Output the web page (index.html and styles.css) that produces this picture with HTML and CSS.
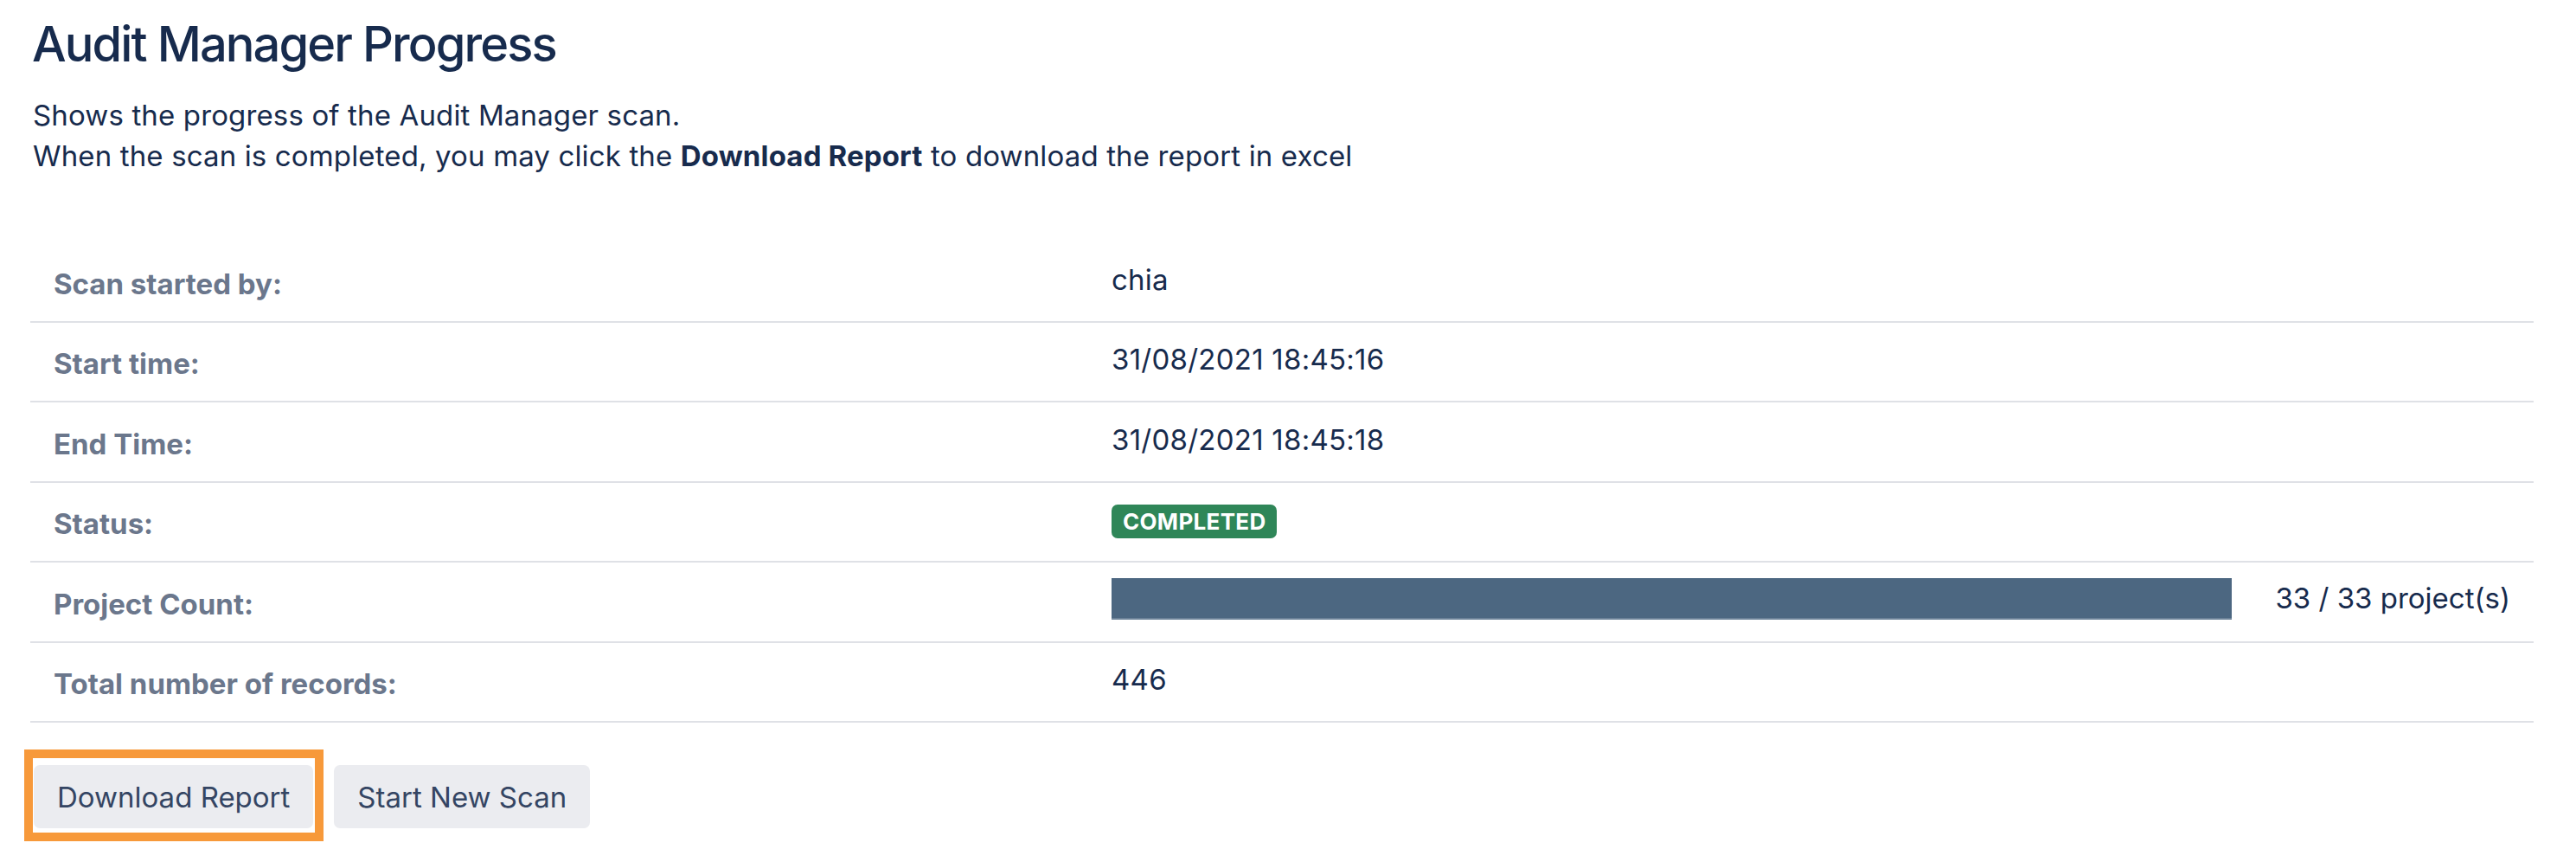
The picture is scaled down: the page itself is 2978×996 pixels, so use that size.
FILE: index.html
```html
<!DOCTYPE html>
<html lang="en">
<head>
<meta charset="utf-8">
<title>Audit Manager Progress</title>
<link rel="stylesheet" href="styles.css">
</head>
<body>
<main class="page">
  <h1 class="title">Audit Manager Progress</h1>
  <p class="intro">Shows the progress of the Audit Manager scan.<br>When the scan is completed, you may click the <strong>Download Report</strong> to download the report in excel</p>
  <table class="scan-table">
    <tbody>
      <tr>
        <th class="label">Scan started by:</th>
        <td class="value">chia</td>
      </tr>
      <tr>
        <th class="label">Start time:</th>
        <td class="value">31/08/2021 18:45:16</td>
      </tr>
      <tr>
        <th class="label">End Time:</th>
        <td class="value">31/08/2021 18:45:18</td>
      </tr>
      <tr>
        <th class="label">Status:</th>
        <td class="value"><span class="lozenge">COMPLETED</span></td>
      </tr>
      <tr>
        <th class="label">Project Count:</th>
        <td class="value value-progress">
          <div class="progress">
            <div class="progress-bar"><div class="progress-fill" style="width:100%"></div></div>
            <span class="progress-text">33 / 33 project(s)</span>
          </div>
        </td>
      </tr>
      <tr>
        <th class="label">Total number of records:</th>
        <td class="value">446</td>
      </tr>
    </tbody>
  </table>
  <div class="actions">
    <span class="highlight"><button class="btn" type="button">Download Report</button></span>
    <button class="btn" type="button">Start New Scan</button>
  </div>
</main>
</body>
</html>
```

FILE: styles.css
```css
html, body {
  margin: 0;
  padding: 0;
  background: #ffffff;
}

body {
  font-family: Inter, "Noto Sans", "Liberation Sans", sans-serif;
  color: #172b4d;
}

.page {
  padding: 17px 49px 0 35px;
}

.title {
  margin: 0 0 25px 2px;
  font-size: 56px;
  line-height: 68px;
  font-weight: 500;
  letter-spacing: -1.9px;
  color: #172b4d;
}

.intro {
  margin: 0 0 76px 3px;
  font-size: 33px;
  line-height: 47px;
  font-weight: 400;
  letter-spacing: 0.14px;
  color: #172b4d;
}

.intro strong {
  font-weight: 700;
}

.scan-table {
  width: 100%;
  border-collapse: collapse;
  border-spacing: 0;
}

.scan-table tr {
  border-bottom: 2px solid #dfe1e6;
}

.label {
  width: 1196px;
  text-align: left;
  vertical-align: top;
  padding: 24.5px 0 19px 27px;
  font-size: 33px;
  line-height: 47px;
  font-weight: 700;
  color: #6b778c;
}

.value {
  vertical-align: top;
  padding: 19.5px 27px 24px 27px;
  font-size: 33px;
  line-height: 47px;
  font-weight: 400;
  letter-spacing: 0.25px;
  color: #172b4d;
}

.value-progress {
  padding-top: 17.5px;
  padding-bottom: 24.5px;
}

.lozenge {
  display: inline-block;
  vertical-align: baseline;
  padding: 0 13px;
  border-radius: 7px;
  background: #2f8658;
  color: #ffffff;
  font-size: 26px;
  line-height: 39px;
  font-weight: 700;
  letter-spacing: 0.3px;
}

.progress {
  display: flex;
  align-items: center;
}

.progress-bar {
  flex: 1;
  height: 48.5px;
  background: #ebecf0;
}

.progress-fill {
  height: 100%;
  background: #4c6781;
  box-shadow: inset 0 -2px 0 #6d8399;
}

.progress-text {
  margin-left: 50px;
  white-space: nowrap;
  letter-spacing: 0;
}

.actions {
  display: flex;
  align-items: flex-start;
  margin: 31px 0 0 -7px;
}

.highlight {
  display: inline-flex;
  border: 10px solid #f7993a;
  padding: 8px 2px 5px 1px;
}

.btn {
  height: 73px;
  padding: 0 27px;
  border: none;
  border-radius: 7px;
  background: #ebecf0;
  color: #344563;
  font-family: Inter, "Noto Sans", "Liberation Sans", sans-serif;
  font-size: 33px;
  font-weight: 400;
  cursor: pointer;
}

.actions > .btn {
  margin: 18px 0 0 12px;
}
```
